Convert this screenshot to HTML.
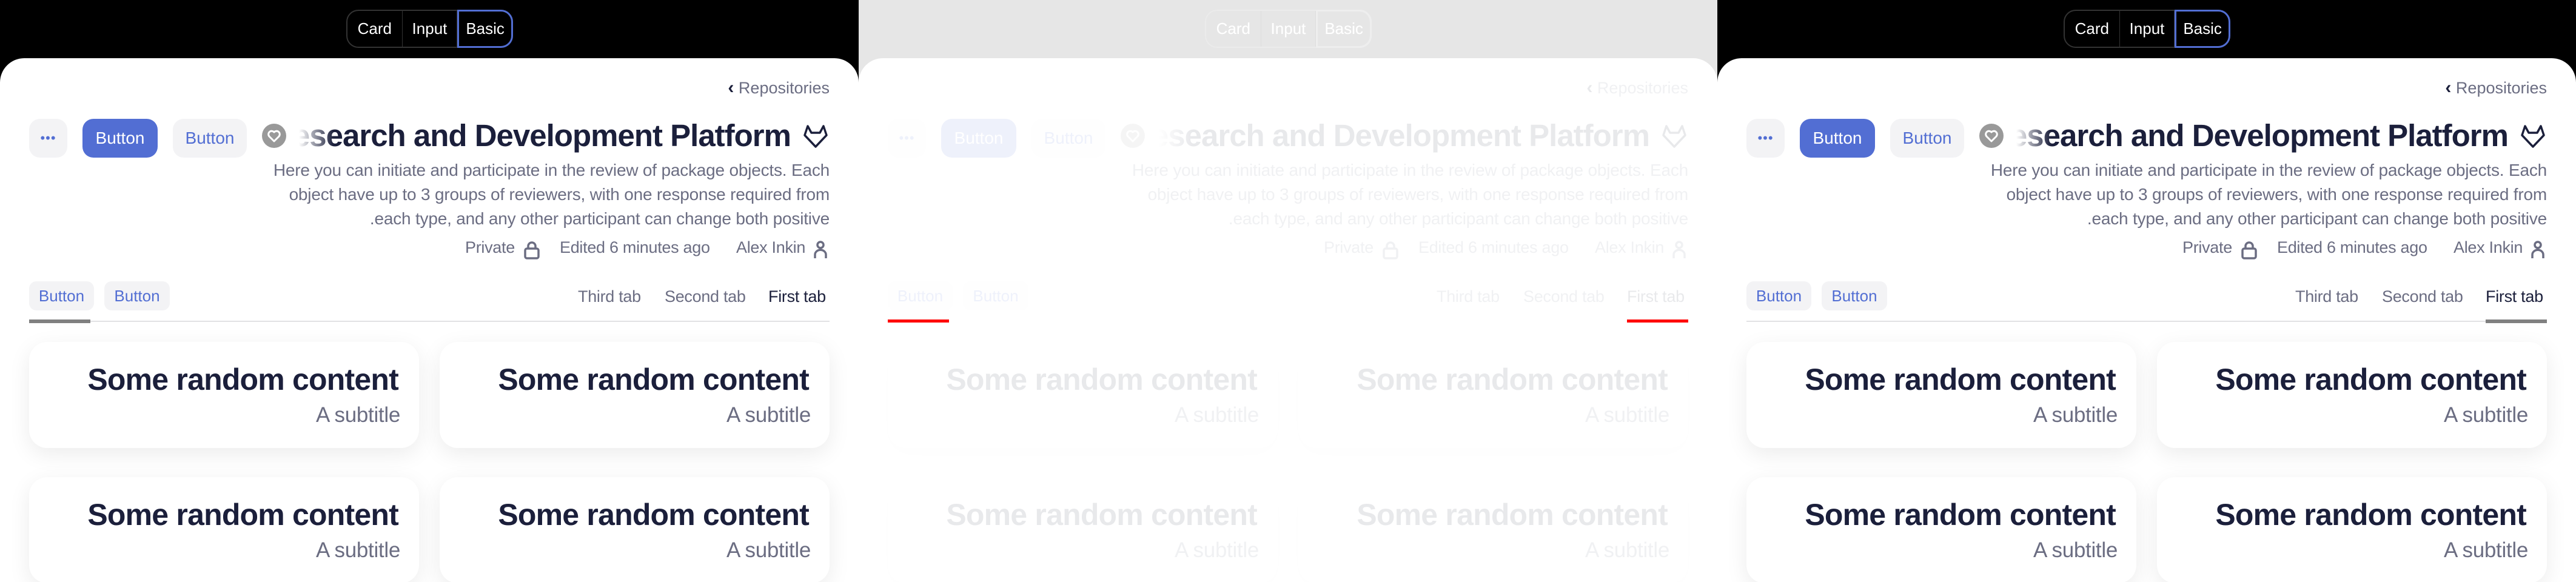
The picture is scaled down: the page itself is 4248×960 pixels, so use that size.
<!DOCTYPE html>
<html><head><meta charset="utf-8">
<style>
*{margin:0;padding:0;box-sizing:border-box}
body{width:4248px;height:960px;overflow:hidden;background:#000;font-family:"Liberation Sans",sans-serif;position:relative}
.p{position:absolute;top:0;width:1416px;height:960px;background:#000;overflow:hidden}
.seg{position:absolute;left:571px;top:16px;width:275px;height:63px;border:2px solid #333;border-radius:20px;display:flex;color:#fff;font-size:26px}
.seg div{width:92px;display:flex;align-items:center;justify-content:center;border-right:1px solid #333}
.seg div.b{border:3px solid #526ed3;border-radius:0 20px 20px 0;margin:-2px -2px -2px 0;width:93px}
.w{position:absolute;left:0;top:96px;width:1416px;height:900px;background:#fff;border-radius:40px 40px 0 0}
.a{position:absolute;white-space:nowrap}
.repo{right:48px;top:128px;font-size:27px;color:#6b6d82}
.repo b{font-size:30px;color:#1b1f3b}
.btn{position:absolute;top:196px;height:64px;border-radius:18px;background:#f3f3f5;color:#526ed3;font-size:28px;display:flex;align-items:center;justify-content:center}
.tclip{position:absolute;left:490px;top:190px;width:814px;height:70px;overflow:hidden}
.title{position:absolute;right:0;top:4px;font-size:51px;font-weight:bold;color:#1b1f3b;letter-spacing:-1px;white-space:nowrap}
.fade{position:absolute;left:0;top:0;width:60px;height:70px;background:linear-gradient(90deg,#fff 5%,rgba(255,255,255,0))}
.desc{position:absolute;right:48px;top:261px;text-align:right;font-size:28px;line-height:40px;color:#6b6d82;letter-spacing:-0.2px;white-space:nowrap}
.meta{top:393px;font-size:27px;color:#6b6d82;letter-spacing:-0.3px}
.tb{position:absolute;top:464px;height:48px;border-radius:12px;background:#f3f3f5;color:#526ed3;font-size:26px;display:flex;align-items:center;justify-content:center}
.tab{top:474px;font-size:27px;color:#6b6d82;letter-spacing:-0.3px}
.line{position:absolute;left:48px;top:529px;width:1320px;height:2px;background:#e2e2e4}
.ind{position:absolute;top:527px;height:6px;width:101px;background:#808080}
.card{position:absolute;width:643px;height:175px;background:#fff;border-radius:30px;box-shadow:0 10px 36px rgba(0,0,0,0.08)}
.card .h{position:absolute;right:34px;top:33px;font-size:50px;font-weight:bold;color:#1b1f3b;letter-spacing:-0.8px;white-space:nowrap}
.card .s{position:absolute;right:31px;top:101px;font-size:35px;color:#6b6d82;letter-spacing:-0.3px}
.ov{position:absolute;left:0;top:0;width:1416px;height:960px;background:rgba(255,255,255,0.9)}
.red{position:absolute;top:527px;height:5px;width:101px;background:#f00}
</style></head><body>

<div class="p" style="left:0">
<div class="seg"><div>Card</div><div>Input</div><div class="b">Basic</div></div>
<div class="w"></div>
<div class="a repo"><b>‹</b> Repositories</div>
<div class="btn" style="left:48px;width:63px;font-size:22px;letter-spacing:1px">•••</div>
<div class="btn" style="left:136px;width:124px;background:#526ed3;color:#fff">Button</div>
<div class="btn" style="left:285px;width:122px">Button</div>
<svg style="position:absolute;left:432px;top:204px" width="40" height="40" viewBox="0 0 40 40"><circle cx="20" cy="20" r="20" fill="#999"/><path d="M20 29 L12 21 A5 5 0 0 1 20 14 A5 5 0 0 1 28 21 Z" fill="none" stroke="#fff" stroke-width="3" stroke-linejoin="round"/></svg>
<div class="tclip"><div class="title">Research and Development Platform</div><div class="fade"></div></div>
<svg style="position:absolute;left:1323px;top:205px" width="44" height="40" viewBox="0 0 44 40"><path d="M4 18 L9 3 L15 14 H29 L35 3 L40 18 L22 37 Z" fill="none" stroke="#1b1f3b" stroke-width="3.5" stroke-linejoin="round"/></svg>
<div class="desc">Here you can initiate and participate in the review of package objects. Each<br>object have up to 3 groups of reviewers, with one response required from<br>.each type, and any other participant can change both positive</div>
<div class="a meta" style="left:767px">Private</div>
<svg style="position:absolute;left:863px;top:396px" width="28" height="32" viewBox="0 0 28 32"><rect x="3" y="14" width="22" height="16" rx="3" fill="none" stroke="#6b6d82" stroke-width="3.5"/><path d="M8 14 V10 A6 6 0 0 1 20 10 V14" fill="none" stroke="#6b6d82" stroke-width="3.5"/></svg>
<div class="a meta" style="left:923px">Edited 6 minutes ago</div>
<div class="a meta" style="left:1214px">Alex Inkin</div>
<svg style="position:absolute;left:1341px;top:396px" width="24" height="32" viewBox="0 0 24 32"><circle cx="12" cy="8" r="5" fill="none" stroke="#6b6d82" stroke-width="3.5"/><path d="M3 30 V24 A7 6 0 0 1 21 24 V30" fill="none" stroke="#6b6d82" stroke-width="3.5"/></svg>
<div class="tb" style="left:48px;width:107px">Button</div>
<div class="tb" style="left:172px;width:108px">Button</div>
<div class="a tab" style="left:953px">Third tab</div>
<div class="a tab" style="left:1096px">Second tab</div>
<div class="a tab" style="left:1267px;color:#1b1f3b">First tab</div>
<div class="line"></div>
<div class="ind" style="left:48px"></div>
<div class="card" style="left:48px;top:564px"><div class="h">Some random content</div><div class="s">A subtitle</div></div>
<div class="card" style="left:725px;top:564px"><div class="h">Some random content</div><div class="s">A subtitle</div></div>
<div class="card" style="left:48px;top:787px"><div class="h">Some random content</div><div class="s">A subtitle</div></div>
<div class="card" style="left:725px;top:787px"><div class="h">Some random content</div><div class="s">A subtitle</div></div>
</div>

<div class="p" style="left:1416px">
<div class="seg"><div>Card</div><div>Input</div><div class="b">Basic</div></div>
<div class="w"></div>
<div class="a repo"><b>‹</b> Repositories</div>
<div class="btn" style="left:48px;width:63px;font-size:22px;letter-spacing:1px">•••</div>
<div class="btn" style="left:136px;width:124px;background:#526ed3;color:#fff">Button</div>
<div class="btn" style="left:285px;width:122px">Button</div>
<svg style="position:absolute;left:432px;top:204px" width="40" height="40" viewBox="0 0 40 40"><circle cx="20" cy="20" r="20" fill="#999"/><path d="M20 29 L12 21 A5 5 0 0 1 20 14 A5 5 0 0 1 28 21 Z" fill="none" stroke="#fff" stroke-width="3" stroke-linejoin="round"/></svg>
<div class="tclip"><div class="title">Research and Development Platform</div><div class="fade"></div></div>
<svg style="position:absolute;left:1323px;top:205px" width="44" height="40" viewBox="0 0 44 40"><path d="M4 18 L9 3 L15 14 H29 L35 3 L40 18 L22 37 Z" fill="none" stroke="#1b1f3b" stroke-width="3.5" stroke-linejoin="round"/></svg>
<div class="desc">Here you can initiate and participate in the review of package objects. Each<br>object have up to 3 groups of reviewers, with one response required from<br>.each type, and any other participant can change both positive</div>
<div class="a meta" style="left:767px">Private</div>
<svg style="position:absolute;left:863px;top:396px" width="28" height="32" viewBox="0 0 28 32"><rect x="3" y="14" width="22" height="16" rx="3" fill="none" stroke="#6b6d82" stroke-width="3.5"/><path d="M8 14 V10 A6 6 0 0 1 20 10 V14" fill="none" stroke="#6b6d82" stroke-width="3.5"/></svg>
<div class="a meta" style="left:923px">Edited 6 minutes ago</div>
<div class="a meta" style="left:1214px">Alex Inkin</div>
<svg style="position:absolute;left:1341px;top:396px" width="24" height="32" viewBox="0 0 24 32"><circle cx="12" cy="8" r="5" fill="none" stroke="#6b6d82" stroke-width="3.5"/><path d="M3 30 V24 A7 6 0 0 1 21 24 V30" fill="none" stroke="#6b6d82" stroke-width="3.5"/></svg>
<div class="tb" style="left:48px;width:107px">Button</div>
<div class="tb" style="left:172px;width:108px">Button</div>
<div class="a tab" style="left:953px">Third tab</div>
<div class="a tab" style="left:1096px">Second tab</div>
<div class="a tab" style="left:1267px;color:#1b1f3b">First tab</div>
<div class="card" style="left:48px;top:564px"><div class="h">Some random content</div><div class="s">A subtitle</div></div>
<div class="card" style="left:725px;top:564px"><div class="h">Some random content</div><div class="s">A subtitle</div></div>
<div class="card" style="left:48px;top:787px"><div class="h">Some random content</div><div class="s">A subtitle</div></div>
<div class="card" style="left:725px;top:787px"><div class="h">Some random content</div><div class="s">A subtitle</div></div>
<div class="ov"></div>
<div class="seg" style="border-color:transparent"><div style="border-color:#ddd">Card</div><div style="border-color:#ddd">Input</div><div class="b" style="border-color:#eee">Basic</div></div>
<div class="red" style="left:48px"></div>
<div class="red" style="left:1267px"></div>
</div>

<div class="p" style="left:2832px">
<div class="seg"><div>Card</div><div>Input</div><div class="b">Basic</div></div>
<div class="w"></div>
<div class="a repo"><b>‹</b> Repositories</div>
<div class="btn" style="left:48px;width:63px;font-size:22px;letter-spacing:1px">•••</div>
<div class="btn" style="left:136px;width:124px;background:#526ed3;color:#fff">Button</div>
<div class="btn" style="left:285px;width:122px">Button</div>
<svg style="position:absolute;left:432px;top:204px" width="40" height="40" viewBox="0 0 40 40"><circle cx="20" cy="20" r="20" fill="#999"/><path d="M20 29 L12 21 A5 5 0 0 1 20 14 A5 5 0 0 1 28 21 Z" fill="none" stroke="#fff" stroke-width="3" stroke-linejoin="round"/></svg>
<div class="tclip"><div class="title">Research and Development Platform</div><div class="fade"></div></div>
<svg style="position:absolute;left:1323px;top:205px" width="44" height="40" viewBox="0 0 44 40"><path d="M4 18 L9 3 L15 14 H29 L35 3 L40 18 L22 37 Z" fill="none" stroke="#1b1f3b" stroke-width="3.5" stroke-linejoin="round"/></svg>
<div class="desc">Here you can initiate and participate in the review of package objects. Each<br>object have up to 3 groups of reviewers, with one response required from<br>.each type, and any other participant can change both positive</div>
<div class="a meta" style="left:767px">Private</div>
<svg style="position:absolute;left:863px;top:396px" width="28" height="32" viewBox="0 0 28 32"><rect x="3" y="14" width="22" height="16" rx="3" fill="none" stroke="#6b6d82" stroke-width="3.5"/><path d="M8 14 V10 A6 6 0 0 1 20 10 V14" fill="none" stroke="#6b6d82" stroke-width="3.5"/></svg>
<div class="a meta" style="left:923px">Edited 6 minutes ago</div>
<div class="a meta" style="left:1214px">Alex Inkin</div>
<svg style="position:absolute;left:1341px;top:396px" width="24" height="32" viewBox="0 0 24 32"><circle cx="12" cy="8" r="5" fill="none" stroke="#6b6d82" stroke-width="3.5"/><path d="M3 30 V24 A7 6 0 0 1 21 24 V30" fill="none" stroke="#6b6d82" stroke-width="3.5"/></svg>
<div class="tb" style="left:48px;width:107px">Button</div>
<div class="tb" style="left:172px;width:108px">Button</div>
<div class="a tab" style="left:953px">Third tab</div>
<div class="a tab" style="left:1096px">Second tab</div>
<div class="a tab" style="left:1267px;color:#1b1f3b">First tab</div>
<div class="line"></div>
<div class="ind" style="left:1267px"></div>
<div class="card" style="left:48px;top:564px"><div class="h">Some random content</div><div class="s">A subtitle</div></div>
<div class="card" style="left:725px;top:564px"><div class="h">Some random content</div><div class="s">A subtitle</div></div>
<div class="card" style="left:48px;top:787px"><div class="h">Some random content</div><div class="s">A subtitle</div></div>
<div class="card" style="left:725px;top:787px"><div class="h">Some random content</div><div class="s">A subtitle</div></div>
</div>

</body></html>
